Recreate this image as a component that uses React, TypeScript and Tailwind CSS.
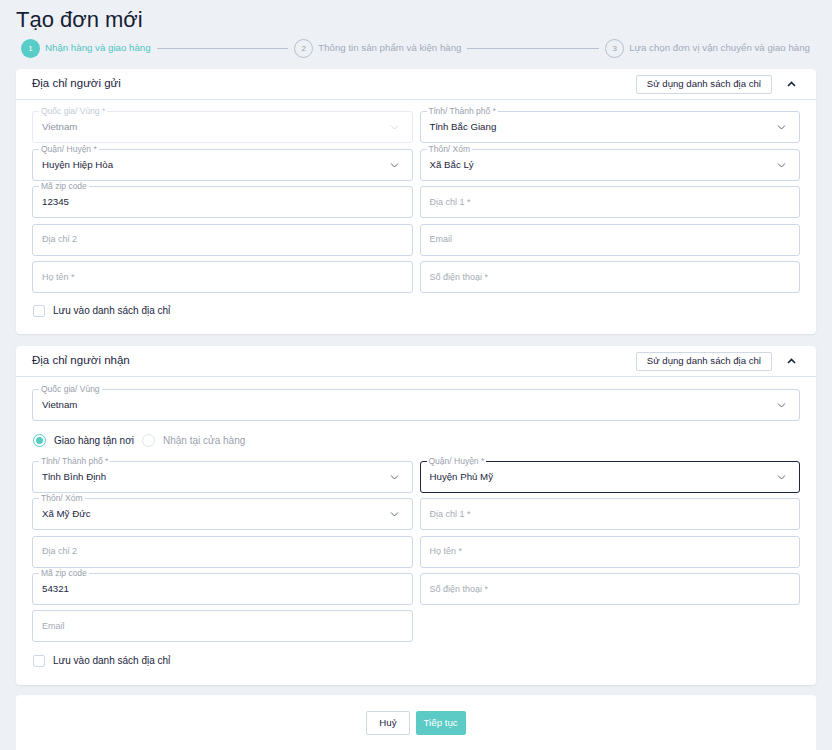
import React from "react";

type F = {
  label?: string;
  value?: string;
  placeholder?: string;
  select?: boolean;
  disabled?: boolean;
  focused?: boolean;
  full?: boolean;
};

function Chevron({ up, light }: { up?: boolean; light?: boolean }) {
  return (
    <svg
      width="9"
      height="6"
      viewBox="0 0 9 6"
      className={light ? "text-[#d5dde8]" : up ? "text-[#1c2540]" : "text-[#5b6478]"}
    >
      <path
        d={up ? "M1 5 L4.5 1.5 L8 5" : "M1 1.5 L4.5 5 L8 1.5"}
        fill="none"
        stroke="currentColor"
        strokeWidth={up ? 1.6 : 1}
      />
    </svg>
  );
}

function Field({ label, value, placeholder, select, disabled, focused, full }: F) {
  const border = focused
    ? "border-[#1c2540]"
    : disabled
    ? "border-[#e6ebf2]"
    : "border-[#cdd9e9]";
  return (
    <div
      className={`relative flex h-[32px] items-center rounded-[3px] border bg-white pl-[9px] pr-[13px] ${border} ${
        full ? "col-span-2" : ""
      }`}
    >
      {label && (
        <span
          className={`absolute -top-[6px] left-[6px] bg-white px-[2px] text-[8.5px] leading-[10px] ${
            disabled ? "text-[#c3cad6]" : "text-[#9aa1ad]"
          }`}
        >
          {label}
        </span>
      )}
      <span
        className={`flex-1 pt-[1px] ${
          value
            ? disabled
              ? "text-[9.7px] text-[#8b93a3]"
              : "text-[9.7px] text-[#1c2540]"
            : "text-[9px] text-[#a5abb5]"
        }`}
      >
        {value || placeholder}
      </span>
      {select && <Chevron light={disabled} />}
    </div>
  );
}

function CardHeader({ title }: { title: string }) {
  return (
    <div className="flex h-[31px] items-center justify-between border-b border-[#d9e4f0] pl-[16px] pr-[20px]">
      <span className="text-[11.5px] text-[#1c2540]">{title}</span>
      <div className="flex items-center gap-[15px]">
        <button className="h-[19px] rounded-[2px] border border-[#cfd8e4] px-[10px] text-[9.6px] text-[#1c2540]">
          Sử dụng danh sách địa chỉ
        </button>
        <Chevron up />
      </div>
    </div>
  );
}

function SaveBox() {
  return (
    <div className="flex h-[12px] items-center gap-[8px] pl-[1px]">
      <span className="h-[12px] w-[12px] rounded-[2px] border border-[#cdd9e9] bg-white" />
      <span className="text-[10px] leading-[12px] text-[#1c2540]">Lưu vào danh sách địa chỉ</span>
    </div>
  );
}

function Step({ n, text, active }: { n: number; text: string; active?: boolean }) {
  return (
    <div className="flex items-center gap-[5px]">
      <span
        className={`flex h-[19px] w-[19px] items-center justify-center rounded-full text-[8px] ${
          active
            ? "bg-[#58ccc6] text-white"
            : "border border-[#b6c0ce] text-[#98a2b1]"
        }`}
      >
        {n}
      </span>
      <span className={`text-[9.7px] ${active ? "text-[#4fc5bf]" : "text-[#a3acb9]"}`}>
        {text}
      </span>
    </div>
  );
}

export default function App() {
  return (
    <div
      className="min-h-[750px] bg-[#edf0f5] px-4"
      style={{ fontFamily: '"Liberation Sans", Arial, sans-serif' }}
    >
      <h1 className="pt-[6px] text-[22px] leading-[28px] text-[#161e36]">Tạo đơn mới</h1>

      {/* stepper */}
      <div className="mt-[5px] flex h-[19px] items-center gap-[6px] pl-[5px] pr-[6px]">
        <Step n={1} text="Nhận hàng và giao hàng" active />
        <div className="h-px flex-1 bg-[#b6c0ce]" />
        <Step n={2} text="Thông tin sản phẩm và kiện hàng" />
        <div className="h-px flex-1 bg-[#b6c0ce]" />
        <Step n={3} text="Lựa chọn đơn vị vận chuyển và giao hàng" />
      </div>

      {/* sender */}
      <div className="mt-[11px] rounded-[4px] bg-white shadow-[0_1px_2px_rgba(0,0,0,0.08)]">
        <CardHeader title="Địa chỉ người gửi" />
        <div className="px-[16px] pb-[17px] pt-[11px]">
          <div className="grid grid-cols-2 gap-x-[7px] gap-y-[5.5px]">
            <Field label="Quốc gia/ Vùng *" value="Vietnam" select disabled />
            <Field label="Tỉnh/ Thành phố *" value="Tỉnh Bắc Giang" select />
            <Field label="Quận/ Huyện *" value="Huyện Hiệp Hòa" select />
            <Field label="Thôn/ Xóm" value="Xã Bắc Lý" select />
            <Field label="Mã zip code" value="12345" />
            <Field placeholder="Địa chỉ 1 *" />
            <Field placeholder="Địa chỉ 2" />
            <Field placeholder="Email" />
            <Field placeholder="Họ tên *" />
            <Field placeholder="Số điện thoại *" />
          </div>
          <div className="mt-[12px]">
            <SaveBox />
          </div>
        </div>
      </div>

      {/* receiver */}
      <div className="mt-[12px] rounded-[4px] bg-white shadow-[0_1px_2px_rgba(0,0,0,0.08)]">
        <CardHeader title="Địa chỉ người nhận" />
        <div className="px-[16px] pb-[18px] pt-[12px]">
          <div className="grid grid-cols-2 gap-x-[7px]">
            <Field label="Quốc gia/ Vùng" value="Vietnam" select full />
          </div>
          <div className="mb-[14px] mt-[13px] flex h-[13px] items-center gap-[8px] pl-[1px] text-[10px]">
            <span className="flex h-[13px] w-[13px] items-center justify-center rounded-full border border-[#58ccc6]">
              <span className="h-[7px] w-[7px] rounded-full bg-[#58ccc6]" />
            </span>
            <span className="text-[#1c2540]">Giao hàng tận nơi</span>
            <span className="h-[13px] w-[13px] rounded-full border border-[#dde4ee]" />
            <span className="text-[#9aa1ad]">Nhận tại cửa hàng</span>
          </div>
          <div className="grid grid-cols-2 gap-x-[7px] gap-y-[5.25px]">
            <Field label="Tỉnh/ Thành phố *" value="Tỉnh Bình Định" select />
            <Field label="Quận/ Huyện *" value="Huyện Phủ Mỹ" select focused />
            <Field label="Thôn/ Xóm" value="Xã Mỹ Đức" select />
            <Field placeholder="Địa chỉ 1 *" />
            <Field placeholder="Địa chỉ 2" />
            <Field placeholder="Họ tên *" />
            <Field label="Mã zip code" value="54321" />
            <Field placeholder="Số điện thoại *" />
            <Field placeholder="Email" />
          </div>
          <div className="mt-[13px]">
            <SaveBox />
          </div>
        </div>
      </div>

      {/* actions */}
      <div className="mt-[10px] flex h-[60px] items-start justify-center gap-[6px] rounded-t-[4px] bg-white pt-[16px]">
        <button className="h-[24px] rounded-[2px] border border-[#cfd8e4] px-[12px] text-[9.7px] text-[#1c2540]">
          Huỷ
        </button>
        <button className="h-[24px] rounded-[2px] bg-[#5ccbc6] px-[8px] text-[9.7px] text-white">
          Tiếp tục
        </button>
      </div>
    </div>
  );
}
